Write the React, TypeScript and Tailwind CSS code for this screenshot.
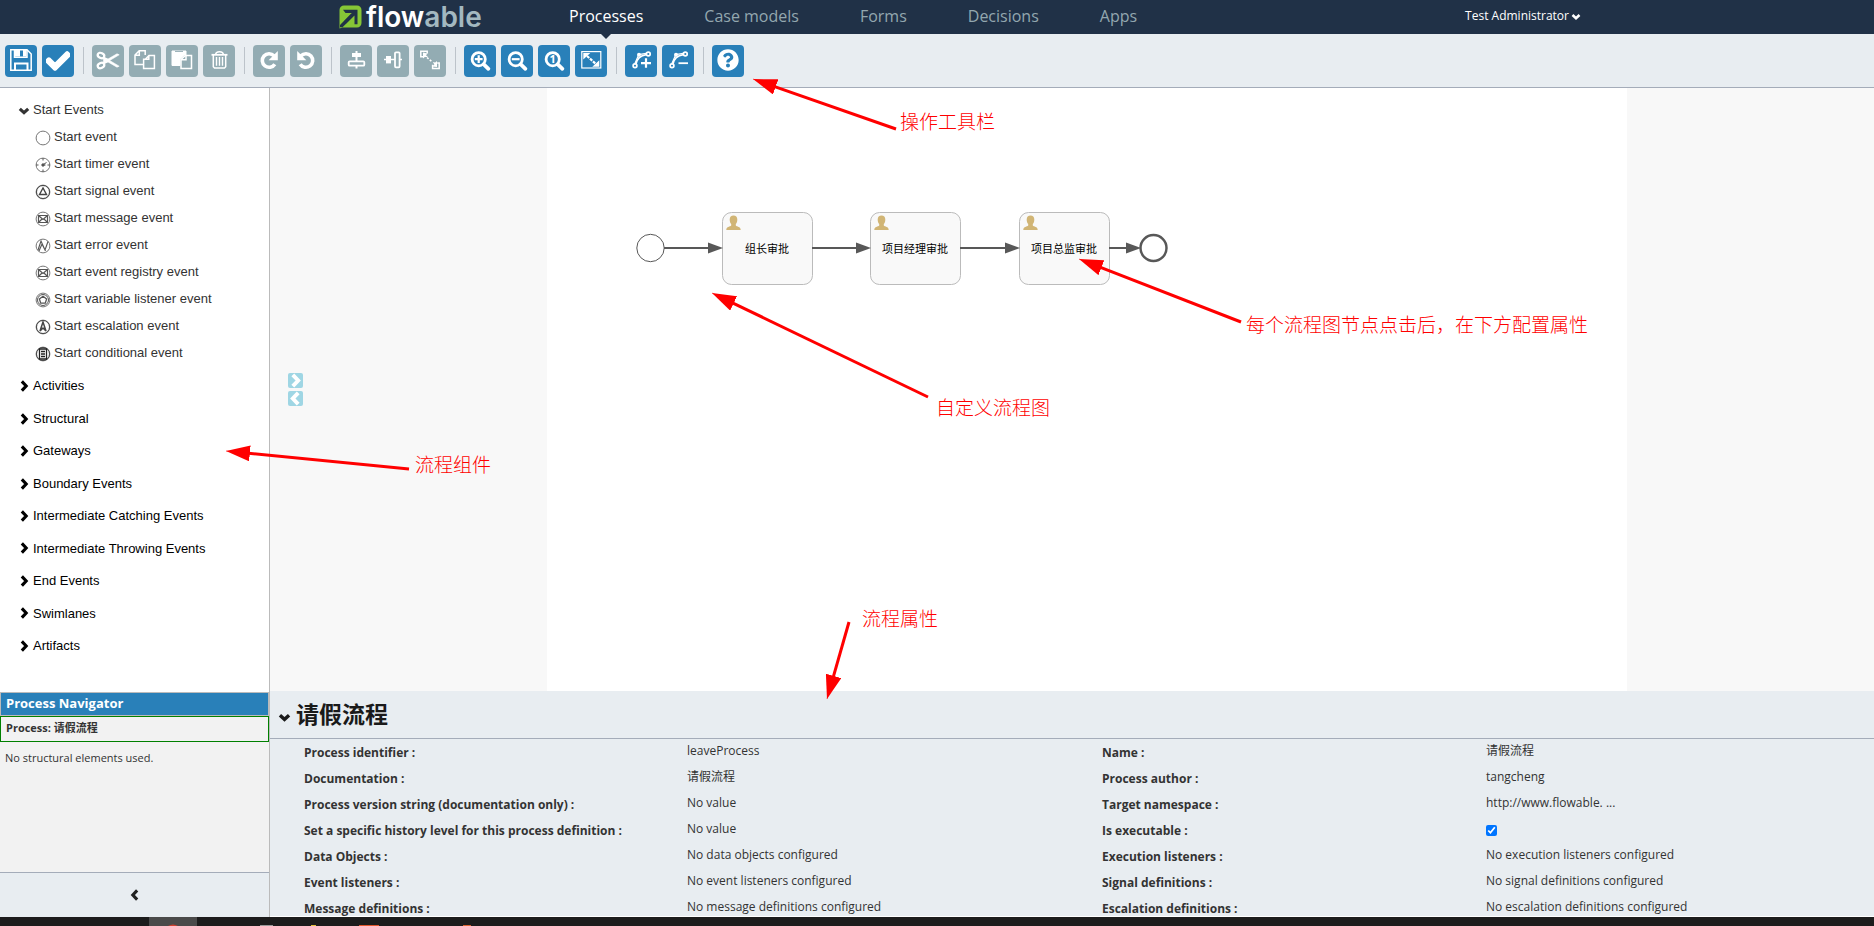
import React from "react";
import { FaCheck, FaQuestionCircle } from "react-icons/fa";

const SANS = "font-['Open_Sans','Noto_Sans_CJK_SC',sans-serif]";

/* ---------- Chevrons ---------- */

const chevronPaths = {
  down: "M1.5 4 5 7.200 8.500 4",
  right: "M3.200 1.200 6.800 5 3.200 8.800",
  left: "M6.800 1.200 3.200 5 6.800 8.800",
};

function Chevron({ to, className }: { to: keyof typeof chevronPaths; className: string }) {
  return (
    <svg viewBox="0 0 10 10" className={className} fill="none" stroke="currentColor" strokeWidth="2.600" aria-hidden="true">
      <path d={chevronPaths[to]} />
    </svg>
  );
}

/* ---------- Toolbar icons, drawn on a 32 x 32 grid ---------- */

function Glyph({ children }: { children: React.ReactNode }) {
  return (
    <svg viewBox="0 0 32 32" className="size-8" fill="none" stroke="#fff" strokeWidth="1.5" aria-hidden="true">
      {children}
    </svg>
  );
}

const SaveIcon = () => (
  <Glyph>
    <path d="M5.800 4.800H22L26.200 9v16.200H5.800z" />
    <path d="M9.500 5v7.200h12.500V5" />
    <path d="M9.500 5h5.500v6.500H9.500zM18 5h3.500v6.500H18z" fill="#fff" stroke="none" />
    <path d="M10 25v-6.500h12.500V25" strokeWidth="2" />
  </Glyph>
);
const CutIcon = () => (
  <Glyph>
    <ellipse cx="9" cy="10.500" rx="3.400" ry="2.500" transform="rotate(25 9 10.500)" strokeWidth="2.200" />
    <ellipse cx="9" cy="20.500" rx="3.400" ry="2.500" transform="rotate(-25 9 20.500)" strokeWidth="2.200" />
    <path d="M11.500 12.200 16 14l9-5.200 2.200 1L13.500 18l-1.500.2z" fill="#fff" strokeWidth=".6" />
    <path d="M11.500 18.800 16 17l9 5.200 2.200-1L13.500 13l-1.500-.2z" fill="#fff" strokeWidth=".6" />
  </Glyph>
);
const CopyIcon = () => (
  <Glyph>
    <path d="M14 19.500H6V10l4.200-4.200h6V10M10.300 6v4.300H6" />
    <path d="M16.300 14.300 20 10.500h5.400v13H14.600v-9.200h5.200v-3.600" />
  </Glyph>
);
const PasteIcon = () => (
  <Glyph>
    <path d="M6 6h14v4h-1.500l-4.500 4.500v6H6z" fill="#fff" strokeWidth="1" strokeLinejoin="round" />
    <path d="M9 6.400h8" stroke="#93acb3" strokeWidth="1" />
    <path d="M19.500 10.500h6v13H15v-9z" fill="#93acb3" />
    <path d="M20 10.500v4.300h-5" />
  </Glyph>
);
const TrashIcon = () => (
  <Glyph>
    <path d="M8.500 9.800h16" strokeWidth="1.800" />
    <path d="M12.700 9.500c0-3.800 7.600-3.800 7.600 0M10.300 10v11.800l1.200 1.200h10l1.200-1.200V10" />
    <path d="M13.500 12v8.800M16.500 12v8.800M19.500 12v8.800" strokeWidth="1.400" />
  </Glyph>
);
const RedoIcon = ({ flip = false }: { flip?: boolean }) => (
  <Glyph>
    <g transform={flip ? "translate(32 0) scale(-1 1)" : undefined}>
      <path d="M21 10.800a6.800 6.800 0 1 0 .8 8.400" strokeWidth="3.600" />
      <path d="M24.800 6v9.200h-9.200z" fill="#fff" stroke="none" />
    </g>
  </Glyph>
);
const AlignVerticalIcon = () => (
  <Glyph>
    <path d="M16.500 6v17.500" strokeWidth="2" />
    <rect x="12" y="8" width="9" height="4" fill="#fff" stroke="none" />
    <rect x="8.700" y="16.300" width="15.600" height="4.400" rx="1" fill="#93acb3" strokeWidth="1.800" />
  </Glyph>
);
const AlignHorizontalIcon = () => (
  <Glyph>
    <path d="M7 14.500h18" strokeWidth="1.500" />
    <rect x="9" y="11" width="5" height="7.400" fill="#fff" stroke="none" />
    <rect x="18" y="7.300" width="4.600" height="15" rx="1" fill="#93acb3" strokeWidth="1.800" />
  </Glyph>
);
const SameSizeIcon = () => (
  <Glyph>
    <path d="M9 11.800H6.800V6.200h6.400V8.500" />
    <path d="M9 7.500v6l1.800-1.600 3.200.2-2-1.800 1.500-1.800z" fill="#fff" stroke="none" />
    <path d="m13 12.500 5.500 4.500" strokeWidth="1.600" strokeDasharray="2 1.600" />
    <path d="M18.600 19.800v3.700h6.600v-5.600h-2" />
    <path d="M23 22v-6l-1.800 1.600-2.400-.6 1.600 2.400-2.400 2.200z" fill="#fff" stroke="none" />
  </Glyph>
);
const Lens = ({ children }: { children: React.ReactNode }) => (
  <Glyph>
    <circle cx="14.700" cy="14.200" r="6.600" strokeWidth="2.800" />
    <path d="m19.800 19.400 4.600 4.400" strokeWidth="3.800" strokeLinecap="round" />
    {children}
  </Glyph>
);
const ZoomInIcon = () => (
  <Lens>
    <path d="M10.800 14.200h7.800M14.700 10.300v7.800" strokeWidth="2.200" />
  </Lens>
);
const ZoomOutIcon = () => (
  <Lens>
    <path d="M10.800 14.200h7.800" strokeWidth="2.200" />
  </Lens>
);
const ZoomActualIcon = () => (
  <Lens>
    <text x="14.700" y="18.200" textAnchor="middle" fontSize="11" fontWeight="700" fontFamily="Open Sans, sans-serif" fill="#fff" stroke="none">
      1
    </text>
  </Lens>
);
const FitIcon = () => (
  <Glyph>
    <rect x="6.800" y="6.600" width="19" height="16.400" strokeWidth="1.200" />
    <path d="m12 11 9 8" strokeWidth="2.200" strokeDasharray="3 1" />
    <path d="M8.300 8h7L8.300 14.600zM24.300 21.800h-7l7-6.600z" fill="#fff" stroke="none" />
  </Glyph>
);
const Bend = ({ children }: { children: React.ReactNode }) => (
  <Glyph>
    <circle cx="10" cy="20.800" r="1.900" strokeWidth="1.700" />
    <circle cx="23.300" cy="9" r="1.900" strokeWidth="1.700" />
    <path d="M9.800 18.800 13.800 9.600l7.500-1.200" strokeWidth="1.200" />
    <path d="M11 19c1-5.500 4-8.500 10.300-9.400" strokeWidth="1.600" />
    <circle cx="14" cy="9.800" r="2" fill="#fff" stroke="none" />
    {children}
  </Glyph>
);
const AddBendIcon = () => (
  <Bend>
    <path d="M16 18.200h10M21 13.200v9.600" strokeWidth="2.200" />
  </Bend>
);
const RemoveBendIcon = () => (
  <Bend>
    <path d="M16.500 18.200H26" strokeWidth="1.800" />
  </Bend>
);

type Tool = { label: string; icon: React.ReactNode; disabled?: boolean };

const toolGroups: Tool[][] = [
  [
    { label: "Save", icon: <SaveIcon /> },
    { label: "Validate", icon: <FaCheck className="size-6 text-white" stroke="currentColor" strokeWidth="36" /> },
  ],
  [
    { label: "Cut", icon: <CutIcon />, disabled: true },
    { label: "Copy", icon: <CopyIcon />, disabled: true },
    { label: "Paste", icon: <PasteIcon />, disabled: true },
    { label: "Delete", icon: <TrashIcon />, disabled: true },
  ],
  [
    { label: "Redo", icon: <RedoIcon />, disabled: true },
    { label: "Undo", icon: <RedoIcon flip />, disabled: true },
  ],
  [
    { label: "Align vertical", icon: <AlignVerticalIcon />, disabled: true },
    { label: "Align horizontal", icon: <AlignHorizontalIcon />, disabled: true },
    { label: "Same size", icon: <SameSizeIcon />, disabled: true },
  ],
  [
    { label: "Zoom in", icon: <ZoomInIcon /> },
    { label: "Zoom out", icon: <ZoomOutIcon /> },
    { label: "Zoom to actual size", icon: <ZoomActualIcon /> },
    { label: "Zoom to fit", icon: <FitIcon /> },
  ],
  [
    { label: "Add bend point", icon: <AddBendIcon /> },
    { label: "Remove bend point", icon: <RemoveBendIcon /> },
  ],
  [{ label: "Help", icon: <FaQuestionCircle className="mb-0.5 size-[22px] text-white" /> }],
];

function Toolbar() {
  return (
    <div className="flex h-[54px] shrink-0 items-center border-b border-[#a4acb9] bg-[#e8edf1] px-[5px]">
      {toolGroups.map((group, i) => (
        <React.Fragment key={i}>
          {i > 0 && <span className="mr-2 ml-[9px] h-[27px] w-px bg-[#bcc3ca]" />}
          <div className="flex gap-[5px]">
            {group.map((tool) => (
              <button
                key={tool.label}
                type="button"
                aria-label={tool.label}
                disabled={tool.disabled}
                className="flex size-8 items-center justify-center rounded bg-[#2980b9] disabled:bg-[#93acb3]"
              >
                {tool.icon}
              </button>
            ))}
          </div>
        </React.Fragment>
      ))}
    </div>
  );
}

/* ---------- Top navigation ---------- */

const sections = ["Processes", "Case models", "Forms", "Decisions", "Apps"];

function TopNav() {
  return (
    <header className={`${SANS} flex h-[34px] shrink-0 items-center bg-[#203147] pr-[293px] pl-[339px]`}>
      <a href="#home" className="flex w-[140px] items-center gap-1">
        <svg viewBox="0 0 23 24" className="h-6 w-[23px] shrink-0" aria-hidden="true">
          <path d="M5 .5h13a4.500 4.500 0 0 1 4.500 4.500v13a4.500 4.500 0 0 1-4.500 4.500H3.500L.5 23.500V5A4.500 4.500 0 0 1 5 .5z" fill="#86c636" />
          <path d="M4 4.800h14.500v14.500h-3V10.500L3.500 22.300H1v-2.200L12.800 8H6.500z" fill="#203147" />
          <path d="M6 17.500 13 10.300" stroke="#203147" strokeWidth="3" />
        </svg>
        <span className="font-['Inter',sans-serif] text-[28px] leading-8 font-semibold text-white">
          flow<span className="text-[#a3b8c0]">able</span>
        </span>
      </a>
      <nav className="ml-[90px] flex h-full gap-[61px] text-base leading-8 text-[#93a7af]">
        {sections.map((name, i) => (
          <a key={name} href={`#${name.toLowerCase().replace(" ", "-")}`} className={i === 0 ? "relative text-white" : ""}>
            {name}
            {i === 0 && (
              <svg viewBox="0 0 10 5" className="absolute top-full left-1/2 h-[5px] w-2.5 -translate-x-1/2" aria-hidden="true">
                <path d="M0 0h10L5 5z" fill="#203147" />
              </svg>
            )}
          </a>
        ))}
      </nav>
      <button type="button" className="ml-auto flex items-center gap-0.5 pb-0.5 text-xs font-medium text-white">
        Test Administrator
        <Chevron to="down" className="size-2.5" />
      </button>
    </header>
  );
}

/* ---------- Shape palette ---------- */

const envelope = (
  <g stroke="#555">
    <path d="M3.500 4.500h9v7h-9zl4.500 4 4.500-4M3.500 11.500 7 8M12.500 11.500 9 8" strokeWidth="1.200" />
  </g>
);

const eventMarks: Record<string, React.ReactNode> = {
  "Start event": null,
  "Start timer event": (
    <g stroke="#555">
      <path d="M8 1v2.500M8 12.500V15M1 8h2.500M12.500 8H15" />
      <path d="M11.500 5.500 7.500 8h3" />
      <circle cx="8" cy="8" r="1.200" fill="#555" />
    </g>
  ),
  "Start signal event": (
    <g stroke="#444">
      <circle cx="8" cy="8" r="6.500" />
      <path d="M8 4 4.500 10.500h7z" strokeWidth="1.400" />
    </g>
  ),
  "Start message event": envelope,
  "Start error event": <path d="m3 12 3-9 4 9 3-8.500M4 13l3-7 3.500 7" stroke="#555" strokeWidth="1.100" />,
  "Start event registry event": envelope,
  "Start variable listener event": (
    <g stroke="#555">
      <circle cx="8" cy="8" r="5.500" />
      <path d="m8 4.300 3.600 2.700-1.300 4.200H5.700L4.400 7z" strokeWidth="1.300" />
    </g>
  ),
  "Start escalation event": (
    <g stroke="#444">
      <circle cx="8" cy="8" r="6.500" />
      <path d="M8 3 5 12l3-3 3 3z" strokeWidth="1.500" />
    </g>
  ),
  "Start conditional event": (
    <g stroke="#222">
      <circle cx="8" cy="8" r="6.500" stroke="#444" />
      <path d="M4.500 3h7v10h-7zM6 5.500h4M6 8h4M6 10.500h4" strokeWidth="1.300" />
    </g>
  ),
};

const groups = [
  "Activities",
  "Structural",
  "Gateways",
  "Boundary Events",
  "Intermediate Catching Events",
  "Intermediate Throwing Events",
  "End Events",
  "Swimlanes",
  "Artifacts",
];

function Palette() {
  return (
    <div className="flex min-h-0 flex-1 flex-col overflow-hidden bg-white pt-[9px] pb-[30px] pl-[18px] font-['Liberation_Sans',Arial,sans-serif] text-[13px]">
      <button type="button" className="flex h-[26px] shrink-0 items-center gap-[3px] text-[#333]">
        <Chevron to="down" className="size-3" />
        Start Events
      </button>
      <ul className="shrink-0 pb-1 pl-[17px] text-[#333]">
        {Object.keys(eventMarks).map((name) => (
          <li key={name} className="flex h-[27px] items-center gap-[3px]">
            <svg viewBox="0 0 16 16" className="mt-0.5 size-4 shrink-0" fill="none" aria-hidden="true">
              <circle cx="8" cy="8" r="6.900" stroke="#777" />
              {eventMarks[name]}
            </svg>
            {name}
          </li>
        ))}
      </ul>
      <div className="flex min-h-0 flex-1 flex-col text-black">
        {groups.map((name) => (
          <button key={name} type="button" className="flex flex-1 items-center gap-[3px]">
            <Chevron to="right" className="size-3" />
            {name}
          </button>
        ))}
      </div>
    </div>
  );
}

function Sidebar() {
  return (
    <aside className="flex w-[270px] shrink-0 flex-col border-r border-[#bbb]">
      <Palette />
      <section className={`${SANS} h-[180px] shrink-0 bg-[#f2f2f2]`}>
        <h2 className="h-6 border border-[#bbb] bg-[#2980b9] pl-[5px] text-[13px] leading-5 font-bold text-white">
          Process Navigator
        </h2>
        <p className="h-[26px] border border-[#008000] pl-[5px] text-[11px] leading-[22px] font-bold text-[#333]">
          Process: 请假流程
        </p>
        <p className="pt-1 pl-[5px] text-[11px] leading-6 text-[#333]">No structural elements used.</p>
      </section>
      <button
        type="button"
        aria-label="Collapse sidebar"
        className="flex h-[45px] shrink-0 items-center justify-center border-t border-[#a4acb9] bg-[#e8edf1] text-[#222]"
      >
        <Chevron to="left" className="size-3" />
      </button>
    </aside>
  );
}

/* ---------- Process diagram ---------- */

const tasks = [
  { x: 175, name: "组长审批" },
  { x: 323, name: "项目经理审批" },
  { x: 472, name: "项目总监审批" },
];
const flows = [
  [117, 176],
  [265, 324],
  [413, 473],
  [562, 594],
];

function Diagram() {
  return (
    <svg width="640" height="240" viewBox="0 0 640 240" className="max-w-full" role="img" aria-label="请假流程">
      <circle cx="103.500" cy="160" r="13.700" fill="#fff" stroke="#585858" />
      {tasks.map((task) => (
        <g key={task.name}>
          <rect x={task.x + 0.5} y="124.500" width="90" height="72" rx="9" fill="#f9f9f9" stroke="#bbb" />
          <path
            transform={`translate(${task.x + 4} 127)`}
            d="M7.500.5c2.400 0 3.800 1.500 3.800 4 0 2-.6 3.500-1.500 4.500v1.500c1 1.200 4.900 1 4.900 4.500H.3c0-3.500 3.900-3.300 4.900-4.500V9C4.300 8 3.700 6.500 3.700 4.500c0-2.500 1.400-4 3.800-4z"
            fill="#d1b575"
          />
          <text
            x={task.x + 45}
            y="165"
            textAnchor="middle"
            fontSize="11"
            fontFamily="Noto Sans CJK SC, sans-serif"
            fill="#000"
          >
            {task.name}
          </text>
        </g>
      ))}
      {flows.map(([from, to]) => (
        <g key={from}>
          <path d={`M${from} 160H${to - 12}`} stroke="#585858" strokeWidth="2" />
          <path d={`M${to} 160l-15 -5.500v11z`} fill="#585858" />
        </g>
      ))}
      <circle cx="606.500" cy="160" r="13" fill="#fff" stroke="#585858" strokeWidth="2.500" />
    </svg>
  );
}

function Canvas() {
  return (
    <div className="relative flex min-h-0 flex-1 overflow-hidden bg-[#f8f8f8] pr-[247px] pl-[277px]">
      <div className="flex-1 bg-white">
        <Diagram />
      </div>
      <div className="absolute top-[285px] left-[18px] flex flex-col gap-[3px] text-white">
        <button type="button" aria-label="Grow canvas" className="flex size-[15px] items-center justify-center rounded-xs bg-[#9fd6e4]">
          <Chevron to="right" className="size-[15px]" />
        </button>
        <button type="button" aria-label="Shrink canvas" className="flex size-[15px] items-center justify-center rounded-xs bg-[#9fd6e4]">
          <Chevron to="left" className="size-[15px]" />
        </button>
      </div>
    </div>
  );
}

/* ---------- Properties ---------- */

const properties: [string, string][] = [
  ["Process identifier", "leaveProcess"],
  ["Name", "请假流程"],
  ["Documentation", "请假流程"],
  ["Process author", "tangcheng"],
  ["Process version string (documentation only)", "No value"],
  ["Target namespace", "http://www.flowable. ..."],
  ["Set a specific history level for this process definition", "No value"],
  ["Is executable", "checkbox"],
  ["Data Objects", "No data objects configured"],
  ["Execution listeners", "No execution listeners configured"],
  ["Event listeners", "No event listeners configured"],
  ["Signal definitions", "No signal definitions configured"],
  ["Message definitions", "No message definitions configured"],
  ["Escalation definitions", "No escalation definitions configured"],
];

function Properties() {
  return (
    <section className={`${SANS} flex h-[226px] shrink-0 flex-col overflow-hidden border-b border-white bg-[#e8edf1]`}>
      <h1 className="h-12 shrink-0 border-b border-[#a4acb9] text-[23px] font-bold text-[#1a1a1a]">
        <button type="button" className="flex h-full items-center gap-[5px] pl-2">
          <Chevron to="down" className="mt-1 size-[13px]" />
          请假流程
        </button>
      </h1>
      <dl className="grid grid-cols-[383fr_415fr_384fr_388fr] pl-[34px] text-xs text-[#333]">
        {properties.map(([label, value]) => (
          <React.Fragment key={label}>
            <dt className="h-[26px] leading-7 font-bold">
              {value === "checkbox" ? <label htmlFor="is-executable">{label} :</label> : `${label} :`}
            </dt>
            <dd className="h-[26px] leading-6">
              {value === "checkbox" ? (
                <input id="is-executable" type="checkbox" defaultChecked className="mt-2 block size-[11px]" />
              ) : (
                value
              )}
            </dd>
          </React.Fragment>
        ))}
      </dl>
    </section>
  );
}

/* ---------- Callouts over the editor ---------- */

const arrows = [
  { from: [896, 129], to: [753, 79] },
  { from: [1241, 322], to: [1079, 259] },
  { from: [928, 397], to: [712, 293] },
  { from: [409, 469], to: [226, 451] },
  { from: [849, 622], to: [827, 699] },
];

function Callouts() {
  return (
    <div className="pointer-events-none absolute inset-0 overflow-hidden font-['Noto_Sans_CJK_SC',sans-serif] text-[19px] leading-[26px] font-light whitespace-nowrap text-[#ff0000]">
      <svg className="absolute inset-0 h-full w-full" aria-hidden="true">
        <defs>
          <marker id="head" markerUnits="userSpaceOnUse" markerWidth="24" markerHeight="16" refX="24" refY="8" orient="auto">
            <path d="M0 0 24 8 0 16z" fill="#ff0000" />
          </marker>
        </defs>
        {arrows.map(({ from, to }) => {
          const length = Math.hypot(to[0] - from[0], to[1] - from[1]);
          const k = (length - 10) / length;
          const x = from[0] + (to[0] - from[0]) * k;
          const y = from[1] + (to[1] - from[1]) * k;
          return (
            <g key={to[0]} stroke="#ff0000" strokeWidth="3">
              <path d={`M${from[0]} ${from[1]}L${x} ${y}`} />
              <path d={`M${from[0]} ${from[1]}L${to[0]} ${to[1]}`} strokeWidth="0.500" markerEnd="url(#head)" />
            </g>
          );
        })}
      </svg>
      <span className="absolute top-[108px] left-[900px]">操作工具栏</span>
      <span className="absolute top-[311px] left-[1246px]">每个流程图节点点击后，在下方配置属性</span>
      <span className="absolute top-[394px] left-[936px]">自定义流程图</span>
      <span className="absolute top-[451px] left-[415px]">流程组件</span>
      <span className="absolute top-[605px] left-[862px]">流程属性</span>
    </div>
  );
}

/* ---------- Desktop task bar edge ---------- */

function Taskbar() {
  return (
    <svg className="block h-[9px] w-full shrink-0 bg-[#1c1c1c]" aria-hidden="true">
      <rect x="149" width="48" height="9" fill="#4a4a4a" />
      <path d="M168 9q5-3 10 0z" fill="#d0402f" />
      <rect x="260" y="8" width="13" height="1" fill="#999" />
      <rect x="311" y="8" width="5" height="1" fill="#e3c13c" />
      <rect x="359" y="8" width="20" height="1" fill="#e2562b" />
      <rect x="463" y="8" width="8" height="1" fill="#d9622f" />
    </svg>
  );
}

export default function App() {
  return (
    <div className="relative flex h-screen flex-col overflow-hidden">
      <TopNav />
      <Toolbar />
      <div className="flex min-h-0 flex-1">
        <Sidebar />
        <main className="flex min-w-0 flex-1 flex-col">
          <Canvas />
          <Properties />
        </main>
      </div>
      <Taskbar />
      <Callouts />
    </div>
  );
}
